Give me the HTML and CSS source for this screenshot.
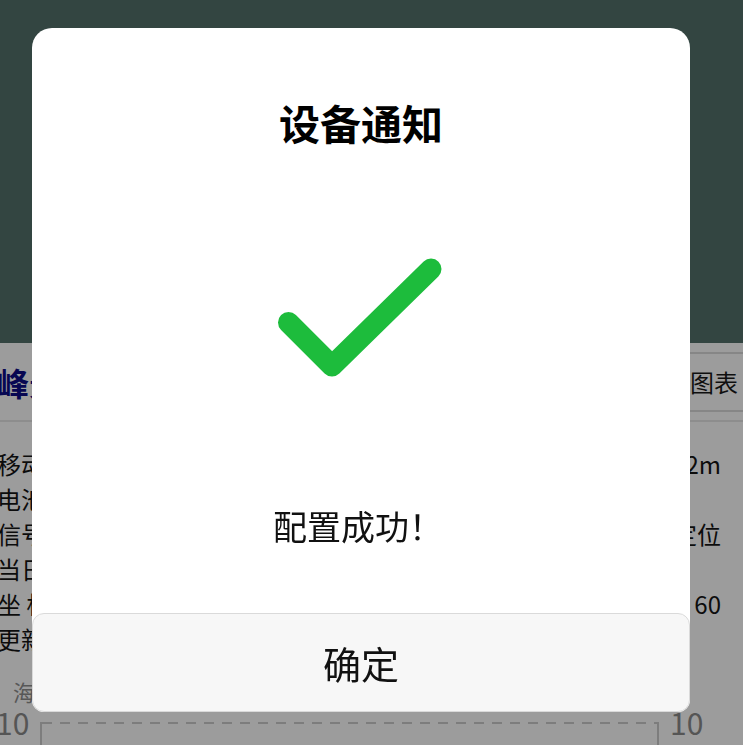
FILE: index.html
```html
<!DOCTYPE html>
<html lang="zh-CN">
<head>
<meta charset="utf-8">
<title>设备通知</title>
<link rel="stylesheet" href="styles.css">
</head>
<body>
<div class="page">
  <div class="topbar"></div>
  <div class="header">
    <div class="site">峰景苑设备</div>
    <div class="chart-btn">图表</div>
  </div>
  <div class="info">
    <div class="row"><span>移动设备编号</span><span>12m</span></div>
    <div class="row"><span>电池电量</span><span></span></div>
    <div class="row"><span>信号强度</span><span>北斗定位</span></div>
    <div class="row"><span>当日次数</span><span></span></div>
    <div class="row"><span>坐 标</span><span>60</span></div>
    <div class="row"><span>更新时间</span><span></span></div>
  </div>
  <div class="chart">
    <div class="axis-title">海拔</div>
    <div class="chart-row">
      <span class="tick left">10</span>
      <div class="plot"><div class="dash"></div></div>
      <span class="tick right">10</span>
    </div>
  </div>
</div>
<div class="mask"></div>
<div class="dialog">
  <h2 class="title">设备通知</h2>
  <svg class="check" width="180" height="140" viewBox="0 0 180 140" aria-hidden="true">
    <path d="M17.5 73.5 L61 117 L160 20" fill="none" stroke="#1dbc3c" stroke-width="21" stroke-linecap="round" stroke-linejoin="round"/>
  </svg>
  <p class="msg">配置成功！</p>
  <div class="footer">确定</div>
</div>
</body>
</html>
```

FILE: styles.css
```css
html, body {
  margin: 0;
  padding: 0;
  width: 743px;
  height: 745px;
  overflow: hidden;
  background: #ffffff;
  font-family: "Noto Sans CJK SC", "Noto Sans", sans-serif;
}

.page {
  display: flex;
  flex-direction: column;
  height: 745px;
}

.topbar {
  height: 343px;
  background: #54716a;
  flex: none;
}

.header {
  height: 77px;
  display: flex;
  align-items: center;
  justify-content: space-between;
  border-bottom: 2px solid #e6e6e6;
  flex: none;
}

.site {
  margin-left: -3px;
  font-size: 32px;
  font-weight: 700;
  color: #0c0c86;
  white-space: nowrap;
}

.chart-btn {
  width: 80px;
  height: 60px;
  box-sizing: border-box;
  margin-right: -17px;
  border: 2px solid #dcdcdc;
  border-right: none;
  display: flex;
  align-items: center;
  padding-left: 8px;
  font-size: 24px;
  color: #1a1a1a;
}

.info {
  padding: 24px 22px 0 0;
  margin-left: -3px;
  display: flex;
  flex-direction: column;
}

.row {
  height: 35px;
  display: flex;
  align-items: center;
  justify-content: space-between;
  font-size: 24px;
  color: #151515;
}

.chart {
  margin-top: 20px;
  display: flex;
  flex-direction: column;
}

.axis-title {
  padding-left: 13px;
  font-size: 22px;
  line-height: 30px;
  color: #8e8e8e;
}

.chart-row {
  display: flex;
  align-items: flex-start;
  margin-top: 16px;
}

.tick {
  font-size: 30px;
  line-height: 30px;
  color: #8c8c8c;
  margin-top: -15px;
}

.tick.left {
  width: 44px;
  margin-left: -4px;
  box-sizing: border-box;
}

.tick.right {
  margin-left: 11px;
}

.plot {
  width: 619px;
  height: 40px;
  box-sizing: border-box;
  border-left: 2px solid #cccccc;
  border-right: 2px solid #cccccc;
}

.dash {
  height: 2px;
  background: repeating-linear-gradient(to right, #cccccc 0, #cccccc 10px, transparent 10px, transparent 18px);
}

.mask {
  position: fixed;
  inset: 0;
  background: rgba(0, 0, 0, 0.39);
}

.dialog {
  position: fixed;
  left: 32px;
  top: 28px;
  width: 658px;
  height: 684px;
  background: #ffffff;
  border-radius: 20px 20px 12px 12px;
  display: flex;
  flex-direction: column;
  align-items: center;
  box-sizing: border-box;
  padding-top: 64px;
}

.title {
  margin: 0;
  font-size: 41px;
  line-height: 60px;
  font-weight: 700;
  color: #000000;
}

.check {
  display: block;
  margin-top: 97px;
}

.msg {
  margin: 113px 0 0;
  font-size: 34px;
  line-height: 48px;
  color: #111111;
  padding-right: 6px;
}

.footer {
  margin-top: auto;
  width: 100%;
  height: 99px;
  box-sizing: border-box;
  background: #f7f7f7;
  border: 1px solid #dadada;
  border-radius: 12px;
  display: flex;
  align-items: center;
  justify-content: center;
  font-size: 38px;
  color: #111111;
}
```
